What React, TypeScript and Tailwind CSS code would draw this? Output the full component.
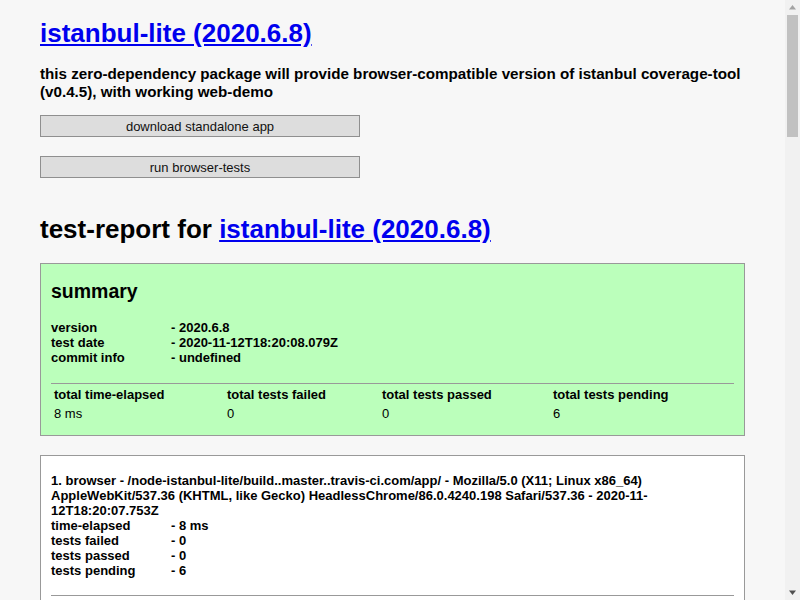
const summaryRows = [
  ["version", "- 2020.6.8"],
  ["test date", "- 2020-11-12T18:20:08.079Z"],
  ["commit info", "- undefined"],
];

const totals = [
  ["total time-elapsed", "8 ms"],
  ["total tests failed", "0"],
  ["total tests passed", "0"],
  ["total tests pending", "6"],
];

const browserRows = [
  ["time-elapsed", "- 8 ms"],
  ["tests failed", "- 0"],
  ["tests passed", "- 0"],
  ["tests pending", "- 6"],
];

const testCases = [
  "testCase_buildApp_default",
  "testCase_buildReadme_default",
  "testCase_coverageReportCreate_default",
  "testCase_instrumentSync_default",
  "testCase_istanbulCoverageMerge_default",
  "testCase_istanbulInstrumentInPackage_default",
];

function Link({ children }: { children: React.ReactNode }) {
  return (
    <a href="#" className="text-[#0000ee] underline">
      {children}
    </a>
  );
}

// drawn scrollbar, the page is taller than the window
function Scrollbar() {
  return (
    <div className="flex w-[15px] shrink-0 flex-col items-center bg-[#f1f1f1]">
      <svg width="15" height="15" viewBox="0 0 15 15" className="shrink-0">
        <path d="M4 9.5 L7.5 5 L11 9.5 Z" fill="#a3a3a3" />
      </svg>
      <div className="h-[122px] w-[11px] bg-[#c1c1c1]" />
      <svg width="15" height="15" viewBox="0 0 15 15" className="mt-auto shrink-0">
        <path d="M4 5.5 L11 5.5 L7.5 10 Z" fill="#505050" />
      </svg>
    </div>
  );
}

export default function App() {
  return (
    <div className="flex h-screen overflow-hidden bg-[#f7f7f7] font-['Liberation_Sans',Arial,sans-serif] text-[13px] leading-[15px] text-black">
      <div className="min-w-0 flex-1 overflow-hidden px-10 pt-[18px] pb-10">
        <h1 className="text-[26px] leading-[30px] font-bold">
          <Link>istanbul-lite (2020.6.8)</Link>
        </h1>
        <h3 className="mt-[17px] text-[15.2px] leading-[17.5px] font-bold">
          this zero-dependency package will provide browser-compatible version of istanbul coverage-tool
          (v0.4.5), with working web-demo
        </h3>

        <div className="mt-[15px] flex flex-col gap-[19px]">
          <button className="h-[22px] w-[320px] border border-[#8f8f8f] bg-[#dddddd] text-[13px] text-[#111]">
            download standalone app
          </button>
          <button className="h-[22px] w-[320px] border border-[#8f8f8f] bg-[#dddddd] text-[13px] text-[#111]">
            run browser-tests
          </button>
        </div>

        <h1 className="mt-[36px] text-[26px] leading-[30px] font-bold">
          test-report for <Link>istanbul-lite (2020.6.8)</Link>
        </h1>

        <div className="mt-[19px] border border-[#999] bg-[#bbffbb] px-[10px] pt-[16px] pb-[14px]">
          <h2 className="text-[19.5px] leading-[22.5px] font-bold">summary</h2>
          <div className="mt-[17px] font-bold">
            {summaryRows.map(([k, v]) => (
              <div key={k} className="flex">
                <span className="w-[120px]">{k}</span>
                <span>{v}</span>
              </div>
            ))}
          </div>
          <hr className="mt-[18px] border-t border-[#999]" />
          <div className="mt-[3px] grid grid-cols-[173px_155px_171px_1fr] gap-y-[4px] pl-[3px]">
            {totals.map(([k]) => (
              <span key={k} className="font-bold">
                {k}
              </span>
            ))}
            {totals.map(([k, v]) => (
              <span key={k + "v"}>{v}</span>
            ))}
          </div>
        </div>

        <div className="mt-[19px] border border-[#999] bg-white px-[10px] pt-[17px] pb-[20px]">
          <div className="font-bold">
            1. browser - /node-istanbul-lite/build..master..travis-ci.com/app/ - Mozilla/5.0 (X11; Linux x86_64)
            AppleWebKit/537.36 (KHTML, like Gecko) HeadlessChrome/86.0.4240.198 Safari/537.36 - 2020-11-12T18:20:07.753Z
          </div>
          <div className="font-bold">
            {browserRows.map(([k, v]) => (
              <div key={k} className="flex">
                <span className="w-[120px]">{k}</span>
                <span>{v}</span>
              </div>
            ))}
          </div>
          <hr className="mt-[17px] border-t border-[#999]" />
          <div className="mt-[3px] grid grid-cols-[30px_120px_80px_1fr] gap-y-[4px] pl-[3px]">
            <span className="font-bold">#</span>
            <span className="font-bold">time-elapsed</span>
            <span className="font-bold">status</span>
            <span className="font-bold">test-case</span>
            {testCases.map((t, i) => (
              <div key={t} className="contents">
                <span>{i + 1}</span>
                <span>0 ms</span>
                <span>pending</span>
                <span>{t}</span>
              </div>
            ))}
          </div>
        </div>
      </div>
      <Scrollbar />
    </div>
  );
}
